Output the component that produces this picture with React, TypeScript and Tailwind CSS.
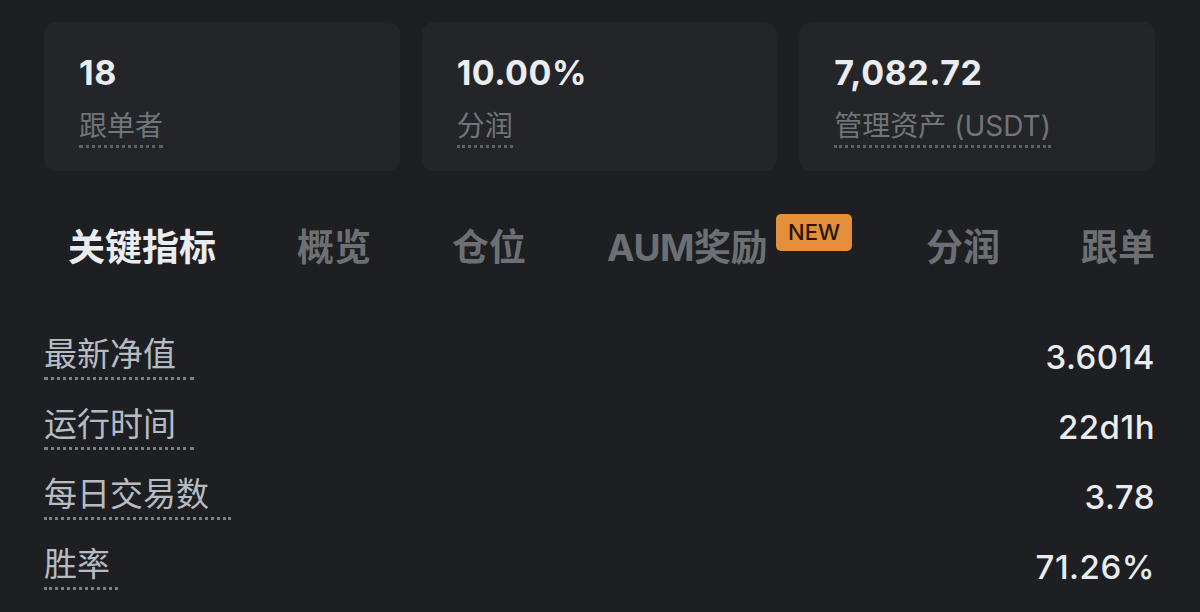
import { useState } from 'react';

const stats = [
  { value: '18', label: '跟单者' },
  { value: '10.00%', label: '分润' },
  { value: '7,082.72', label: '管理资产 (USDT)' },
];

const tabs = ['关键指标', '概览', '仓位', 'AUM奖励', '分润', '跟单'];

const metrics = [
  { label: '最新净值', value: '3.6014', pad: 'pr-[18px]' },
  { label: '运行时间', value: '22d1h', pad: 'pr-[18px]' },
  { label: '每日交易数', value: '3.78', pad: 'pr-[22px]' },
  { label: '胜率', value: '71.26%', pad: 'pr-[8px]' },
];

const font = { fontFamily: 'Inter, "Noto Sans CJK SC", sans-serif' };

export default function App() {
  const [active, setActive] = useState(0);

  return (
    <div className="w-[1200px] h-[612px] overflow-hidden bg-[#1d1f22] pl-[44px] pr-[45px] pt-[22px]" style={font}>
      {/* Stat cards */}
      <div className="grid grid-cols-3 gap-[22px]">
        {stats.map((s) => (
          <div key={s.label} className="h-[149px] rounded-[12px] bg-[#232528] pl-[35px] pt-[31px]">
            <div className="text-[34px] leading-[40px] font-bold tracking-[0.5px] text-[#eaecef]">{s.value}</div>
            <div className="mt-[16px] inline-block text-[28px] leading-[34px] pb-[2px] text-[#71757a] border-b-[3px] border-dotted border-[#5e6268]">
              {s.label}
            </div>
          </div>
        ))}
      </div>

      {/* Tabs */}
      <div className="mt-[46px] flex items-center justify-between h-[62px]">
        {tabs.map((t, i) => (
          <button
            key={t}
            onClick={() => setActive(i)}
            className={`relative text-[37px] leading-[44px] font-bold ${
              i === active ? 'text-[#eaecef] ml-[24px]' : 'text-[#6c7075]'
            } ${t === 'AUM奖励' ? 'mr-[78px] tracking-[-0.5px]' : ''}`}
          >
            {t}
            {t === 'AUM奖励' && (
              <span className="absolute left-[169px] top-[-12px] rounded-[5px] bg-[#e4903a] px-[12px] text-[22px] leading-[37px] font-medium tracking-normal text-[#2a1606]">
                NEW
              </span>
            )}
          </button>
        ))}
      </div>

      {/* Metrics */}
      <div className="mt-[59px] flex flex-col gap-[32px]">
        {metrics.map((m) => (
          <div key={m.label} className="flex items-center justify-between h-[38px]">
            <span className={`text-[33px] leading-[38px] pb-[4px] text-[#b7bcc3] border-b-[3px] border-dotted border-[#7b8087] ${m.pad}`}>
              {m.label}
            </span>
            <span className="text-[33px] leading-[38px] font-medium tracking-[0.5px] text-[#eaecef]">{m.value}</span>
          </div>
        ))}
      </div>
    </div>
  );
}
